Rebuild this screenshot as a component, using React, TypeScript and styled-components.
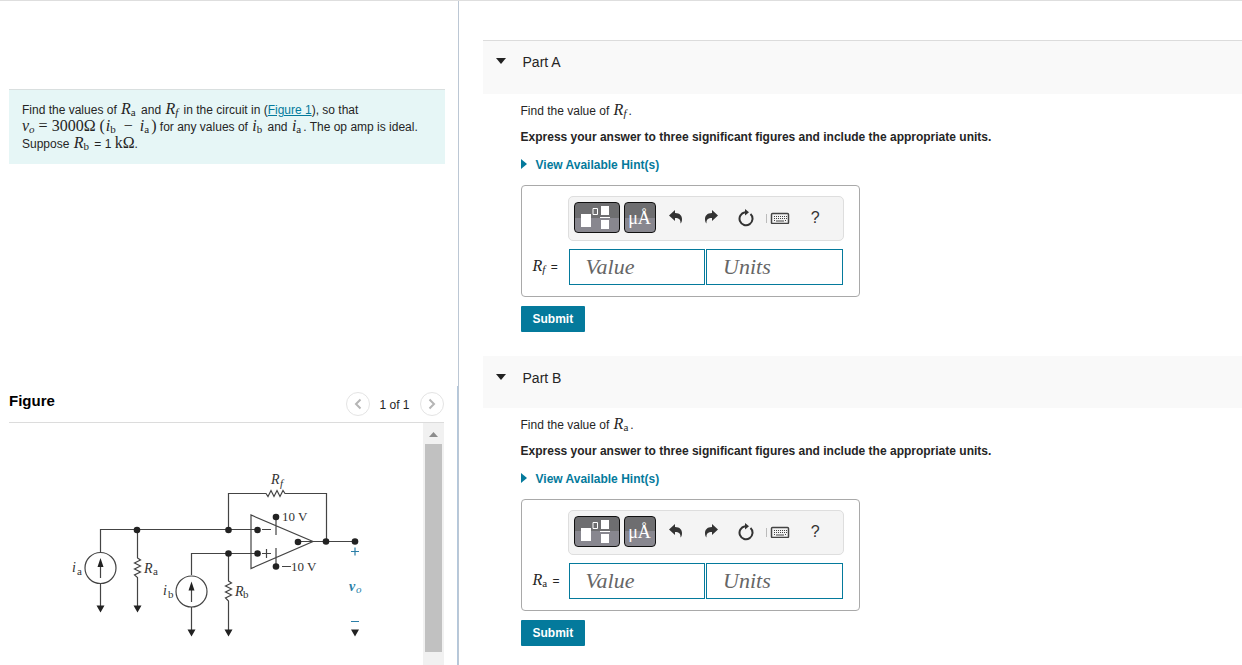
import React from "react";
import styled, { createGlobalStyle } from "styled-components";

const sans = `"Liberation Sans", Arial, sans-serif`;
const serif = `"Liberation Serif", "Times New Roman", serif`;
const teal = "#047a9c";

const GlobalStyle = createGlobalStyle`
  * { box-sizing: border-box; }
  body {
    margin: 0;
    background: #fff;
    color: #252525;
    font: 12px/16px ${sans};
  }
  p, h1, h2 { margin: 0; }
  button, input { font: inherit; }
`;

const Page = styled.div`
  display: grid;
  grid-template-columns: calc(37% - 1px) minmax(0, 1fr);
  min-height: 100vh;
  border-top: 1px solid #dedede;
`;

const Side = styled.aside`
  display: flex;
  flex-direction: column;
  height: calc(100vh - 1px);
  border-right: 1px solid #bcc7d4;
`;

const QuestionPane = styled.section`
  flex: 0 0 58%;
  padding: 88px 13px 0 9px;
`;

const Question = styled.p`
  padding: 12px 12px 11px 13px;
  border-top: 1px solid #d9dfdf;
  background: #e6f6f6;
  line-height: 17px;
`;

const Link = styled.a`
  color: ${teal};
  text-decoration: underline;
`;

const MathGroup = styled.span`
  margin: 0 2px 0 1px;
  white-space: nowrap;
`;

const Italic = styled.i`
  font: italic 16px/1px ${serif};
`;

const Upright = styled.span`
  font: 16px/1px ${serif};
`;

const Operator = styled.span<{ $wide?: boolean }>`
  margin: 0 ${(p) => (p.$wide ? 6 : 4)}px;
  font: 16px/1px ${serif};
`;

const Subscript = styled.sub<{ $italic?: boolean }>`
  font: ${(p) => (p.$italic ? "italic" : "normal")} 11px/1px ${serif};
  vertical-align: -2px;
`;

const FigurePane = styled.section`
  flex: 1;
  min-height: 0;
  display: flex;
  flex-direction: column;
  padding: 0 13px 0 9px;
  border-right: 1px solid #b4c8dc;
`;

const FigureHeader = styled.header`
  display: flex;
  align-items: center;
  justify-content: space-between;
  height: 37px;
  border-bottom: 1px solid #dcdcdc;
`;

const FigureTitle = styled.h2`
  color: #000;
  font-size: 15px;
  line-height: 16px;
  padding-bottom: 6px;
`;

const Pager = styled.nav`
  display: flex;
  align-items: center;
  gap: 10px;
`;

const PageCount = styled.span`
  padding-top: 2px;
`;

const RoundButton = styled.button`
  display: grid;
  place-items: center;
  width: 24px;
  height: 24px;
  padding: 0;
  border: 1px solid #e4e4e4;
  border-radius: 50%;
  background: #fff;
`;

const FigureBody = styled.div`
  flex: 1;
  min-height: 0;
  display: flex;
  justify-content: space-between;
  overflow: hidden;
`;

const ScrollTrack = styled.div`
  display: flex;
  flex-direction: column;
  align-items: center;
  width: 21px;
  padding: 9px 0 13px;
  background: #f1f1f1;
`;

const ScrollThumb = styled.div`
  flex: 1;
  width: 17px;
  margin-top: 7px;
  background: #c1c1c1;
`;

const Main = styled.main`
  padding: 39px 0 18px 24px;
`;

const Part = styled.section`
  margin-bottom: 24px;
`;

const PartHeader = styled.header<{ $ruled?: boolean }>`
  display: flex;
  align-items: flex-start;
  gap: 17px;
  padding: ${(p) => (p.$ruled ? "13px 13px 24px" : "14px 13px 22px")};
  border-top: ${(p) => (p.$ruled ? "1px solid #dcdcdc" : "0")};
  background: #f9f9f9;
`;

const Toggle = styled.button`
  display: block;
  padding: 4px 0;
  border: 0;
  background: none;
  line-height: 0;
`;

const PartTitle = styled.h2`
  font-size: 14px;
  font-weight: 400;
  line-height: 16px;
`;

const PartBody = styled.div`
  padding: 8px 38px 0;
`;

const Prompt = styled.p`
  line-height: 18px;
`;

const Instruction = styled.p`
  margin-top: 8px;
  font-weight: 700;
  line-height: 18px;
`;

const Hint = styled.button`
  display: flex;
  align-items: center;
  gap: 9px;
  margin-top: 10px;
  padding: 0;
  border: 0;
  background: none;
  color: ${teal};
  font-weight: 700;
  line-height: 18px;
`;

const AnswerBox = styled.div`
  width: 339px;
  max-width: 100%;
  margin-top: 11px;
  padding: 10px 15px 11px 10px;
  border: 1px solid #a9a9a9;
  border-radius: 4px;
`;

const Toolbar = styled.div`
  display: flex;
  align-items: center;
  height: 45px;
  margin-left: 36px;
  padding: 0 5px 2px;
  border: 1px solid #dedede;
  border-radius: 5px;
  background: #f4f4f4;
`;

const DarkButton = styled.button<{ $wide?: boolean }>`
  display: grid;
  place-items: center;
  width: ${(p) => (p.$wide ? 46 : 32)}px;
  height: 31px;
  margin: 0 4px 0 0;
  padding: 0;
  border: 1px solid #111;
  border-radius: 4px;
  background: linear-gradient(#6e6e70 0 50%, #88878f 50% 100%);
  color: #fff;
  font: 18px/20px ${serif};
`;

const IconButtons = styled.div`
  display: grid;
  grid-template-columns: repeat(5, 1fr);
  flex: 0 0 174px;
  margin-left: -1px;
`;

const IconButton = styled.button`
  display: grid;
  place-items: center;
  height: 31px;
  padding: 0;
  border: 0;
  background: none;
  color: #333;
  font: 16px/20px ${sans};
`;

const Fields = styled.div`
  display: flex;
  align-items: center;
  gap: 1px;
  margin: 8px 1px 0 0;
`;

const FieldLabel = styled.label`
  width: 36px;
`;

const Field = styled.input`
  flex: 1;
  min-width: 0;
  height: 36px;
  padding: 0 16px;
  border: 1px solid ${teal};
  border-radius: 0;
  background: #fff;
  font: italic 22px/28px ${serif};
  &::placeholder { color: #666; opacity: 1; }
`;

const Submit = styled.button`
  display: block;
  height: 26px;
  margin-top: 9px;
  padding: 0 12px;
  border: 0;
  border-radius: 1px;
  background: ${teal};
  color: #fff;
  font-weight: 700;
  line-height: 25px;
`;

const R = ({ sub }: { sub: string }) => (
  <MathGroup>
    <Italic>R</Italic>
    <Subscript $italic={sub === "f"}>{sub}</Subscript>
  </MathGroup>
);

const I = ({ sub }: { sub: string }) => (
  <MathGroup>
    <Italic>i</Italic>
    <Subscript>{sub}</Subscript>
  </MathGroup>
);

const Chevron = ({ flip }: { flip?: boolean }) => (
  <svg width="8" height="12" viewBox="0 0 8 12" fill="none" stroke="#b5b5b5" strokeWidth="2">
    <path d={flip ? "M1.500 1.500 6 6l-4.500 4.500" : "M6.500 1.500 2 6l4.500 4.500"} />
  </svg>
);

const dots = [
  [137, 530], [228.5, 530], [257.5, 530], [228.5, 553.5], [257.5, 553.5],
  [276, 517], [276, 566.5], [298, 542], [326, 541.5], [355, 541.5],
];

const Circuit = () => (
  <svg width="372" height="242" viewBox="9 423 372 242" role="img" aria-label="Op amp circuit" fill="none" stroke="#444" strokeWidth="1.200">
    <path d="M100.500 552V529.500H259M137.500 529.500V558l3 2-6 3 6 3-6 3 6 3-6 3 3 2.500V606M100.500 584V606" />
    <path d="M228.500 529.500V493.500H266l2 3 3-6 3 6 3-6 3 6 3-6 2 3H326.500V541.500M298 541.500H355" />
    <path d="M191.500 575V553.500H259M191.500 607V630M228.500 553.500V581l3 2-6 3 6 3-6 3 6 3-6 3 3 3V630" />
    <path d="M251 515V568.500L313 541.500ZM276 517V535M276 566V548" />
    <circle cx="100.500" cy="568" r="15.500" />
    <circle cx="191.500" cy="591.500" r="15.500" />
    <path d="M100.500 578V564M191.500 602V588M262 529.500h9M262 553.500h9M266.500 549v9M282 566.500h9" />
    <g fill="#222" stroke="none">
      <path d="M97.500 567h6l-3-9zM188.500 590.500h6l-3-9zM96.500 605.500h8l-4 7zM133.500 605.500h8l-4 7zM187.500 629.500h8l-4 7zM224.500 629.500h8l-4 7zM351 629.500h8l-4 7z" />
      {dots.map(([x, y]) => (
        <circle key={`${x}-${y}`} cx={x} cy={y} r="3.300" />
      ))}
    </g>
    <path stroke="#2b7fa8" d="M351 551.500h8M355 547.500v8M351 621.500h8" />
    <g fill="#333" stroke="none" fontFamily={serif} fontSize="14">
      <text x="72" y="572" fontStyle="italic">i</text>
      <text x="77" y="575" fontSize="11">a</text>
      <text x="144" y="573" fontStyle="italic">R</text>
      <text x="153" y="575" fontSize="11">a</text>
      <text x="163" y="595" fontStyle="italic">i</text>
      <text x="168" y="598" fontSize="11">b</text>
      <text x="235" y="596" fontStyle="italic">R</text>
      <text x="243" y="598" fontSize="11">b</text>
      <text x="271" y="484" fontStyle="italic">R</text>
      <text x="280" y="487" fontSize="11" fontStyle="italic">f</text>
      <text x="282" y="521" fontSize="13">10 V</text>
      <text x="291" y="571" fontSize="13">10 V</text>
      <text x="349" y="591" fontStyle="italic" fontWeight="700" fill="#2b7fa8">v</text>
      <text x="356" y="593" fontSize="11" fontStyle="italic" fill="#2b7fa8">o</text>
    </g>
  </svg>
);

const TemplateIcon = () => (
  <svg width="32" height="24" viewBox="0 0 32 24" fill="#fff">
    <path d="M0 8h10v13H0zM20 0h8v9h-8zM20 14h8v9h-8zM19 11h10v1H19z" />
    <path d="M12 2.500h4.500v6H12z" fill="none" stroke="#fff" />
  </svg>
);

const UndoIcon = ({ flip }: { flip?: boolean }) => (
  <svg width="14" height="16" viewBox="0 0 14 16" fill="currentColor">
    <path
      transform={flip ? "matrix(-1 0 0 1 14 0)" : undefined}
      d="M6 0v3c5 0 7 3 7 6 0 2-.500 3.500-1.500 4.500.300-4-1.500-5.500-5.500-5.500V11L0 5.500Z"
    />
  </svg>
);

const ResetIcon = () => (
  <svg width="16" height="18" viewBox="0 0 16 18" fill="none" stroke="currentColor" strokeWidth="2">
    <path d="M12.500 5A6.500 6.500 0 1 1 7 3.300" />
    <path d="M7 0v6.500l4-3.200z" fill="currentColor" stroke="none" />
  </svg>
);

const KeyboardIcon = () => (
  <svg width="28" height="12" viewBox="0 0 28 12" fill="none" stroke="#444">
    <path d="M.5 2v9" stroke="#bbb" />
    <rect x="5.500" y="1.500" width="17" height="10" rx="1" strokeWidth="1.500" />
    <path d="M8 4.500h13M8 6.500h13M8 8.500h2M19 8.500h2" strokeDasharray="1 1" />
    <path d="M10 9h8" />
  </svg>
);

type PartProps = { name: string; sub: string; ruled?: boolean };

const QuestionPart = ({ name, sub, ruled }: PartProps) => (
  <Part>
    <PartHeader $ruled={ruled}>
      <Toggle aria-label={`Collapse Part ${name}`}>
        <svg width="10" height="6" viewBox="0 0 10 6" fill="#222"><path d="M0 0h10L5 6z" /></svg>
      </Toggle>
      <PartTitle>Part {name}</PartTitle>
    </PartHeader>
    <PartBody>
      <Prompt>Find the value of <R sub={sub} />.</Prompt>
      <Instruction>Express your answer to three significant figures and include the appropriate units.</Instruction>
      <Hint>
        <svg width="6" height="12" viewBox="0 0 6 12" fill={teal}><path d="M0 0 6 5 0 10z" /></svg>
        View Available Hint(s)
      </Hint>
      <AnswerBox>
        <Toolbar role="toolbar">
          <DarkButton $wide aria-label="Templates"><TemplateIcon /></DarkButton>
          <DarkButton aria-label="Symbols">μÅ</DarkButton>
          <IconButtons>
            <IconButton aria-label="Undo"><UndoIcon /></IconButton>
            <IconButton aria-label="Redo"><UndoIcon flip /></IconButton>
            <IconButton aria-label="Reset"><ResetIcon /></IconButton>
            <IconButton aria-label="Keyboard shortcuts"><KeyboardIcon /></IconButton>
            <IconButton aria-label="Help">?</IconButton>
          </IconButtons>
        </Toolbar>
        <Fields>
          <FieldLabel htmlFor={`value-${name}`}><R sub={sub} /> =</FieldLabel>
          <Field id={`value-${name}`} placeholder="Value" />
          <Field aria-label="Units" placeholder="Units" />
        </Fields>
      </AnswerBox>
      <Submit>Submit</Submit>
    </PartBody>
  </Part>
);

export default function App() {
  return (
    <>
      <GlobalStyle />
      <Page>
        <Side>
          <QuestionPane>
            <Question>
              Find the values of <R sub="a" /> and <R sub="f" /> in the circuit in (<Link href="#figure">Figure 1</Link>), so that
              <br />
              <Italic>v</Italic><Subscript $italic>o</Subscript>
              <Operator>=</Operator>
              <Upright>3000Ω (</Upright><I sub="b" /><Operator $wide>−</Operator><I sub="a" /><Upright>)</Upright> for any values of <I sub="b" /> and <I sub="a" />. The op amp is ideal.
              <br />
              Suppose <R sub="b" /> = 1 <Upright>kΩ</Upright>.
            </Question>
          </QuestionPane>
          <FigurePane id="figure">
            <FigureHeader>
              <FigureTitle>Figure</FigureTitle>
              <Pager aria-label="Figures">
                <RoundButton aria-label="Previous"><Chevron /></RoundButton>
                <PageCount>1 of 1</PageCount>
                <RoundButton aria-label="Next"><Chevron flip /></RoundButton>
              </Pager>
            </FigureHeader>
            <FigureBody>
              <Circuit />
              <ScrollTrack>
                <svg width="9" height="5" viewBox="0 0 9 5" fill="#8c8c8c"><path d="M0 5h9L4.500 0z" /></svg>
                <ScrollThumb />
              </ScrollTrack>
            </FigureBody>
          </FigurePane>
        </Side>
        <Main>
          <QuestionPart name="A" sub="f" ruled />
          <QuestionPart name="B" sub="a" />
        </Main>
      </Page>
    </>
  );
}
